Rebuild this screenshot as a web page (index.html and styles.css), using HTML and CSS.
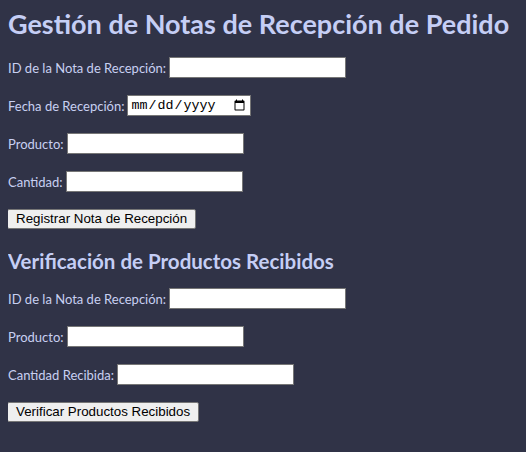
FILE: index.html
```html
<!DOCTYPE html>
<html lang="es">
<head>
<meta charset="utf-8">
<title>Gestión de Notas de Recepción de Pedido</title>
<link rel="stylesheet" href="styles.css">
</head>
<body>
<h1 class="title">Gestión de Notas de Recepción de Pedido</h1>
<form class="form">
  <div class="field"><label class="label" for="id1">ID de la Nota de Recepción:</label><input class="input" id="id1" type="text"></div>
  <div class="field"><label class="label" for="fecha">Fecha de Recepción:</label><input class="input date" id="fecha" type="date"></div>
  <div class="field"><label class="label" for="prod1">Producto:</label><input class="input" id="prod1" type="text"></div>
  <div class="field"><label class="label" for="cant1">Cantidad:</label><input class="input" id="cant1" type="text"></div>
  <div class="actions"><button class="btn" type="button">Registrar Nota de Recepción</button></div>
</form>
<h2 class="subtitle">Verificación de Productos Recibidos</h2>
<form class="form">
  <div class="field"><label class="label" for="id2">ID de la Nota de Recepción:</label><input class="input" id="id2" type="text"></div>
  <div class="field"><label class="label" for="prod2">Producto:</label><input class="input" id="prod2" type="text"></div>
  <div class="field"><label class="label" for="cant2">Cantidad Recibida:</label><input class="input" id="cant2" type="text"></div>
  <div class="actions"><button class="btn" type="button">Verificar Productos Recibidos</button></div>
</form>
</body>
</html>
```
FILE: styles.css
```css
html, body {
  background: #303347;
}
body {
  margin: 8px;
  color: #c8d0f2;
  font-family: Lato, "Open Sans", sans-serif;
  font-size: 13px;
}
.title {
  margin: 0 0 17px 0;
  font-size: 27px;
  font-weight: 700;
  line-height: 32px;
  color: #c5cef5;
  white-space: nowrap;
}
.subtitle {
  margin: 0 0 15px 0;
  font-size: 20.5px;
  font-weight: 700;
  line-height: 24px;
  color: #c5cef5;
}
.form {
  display: flex;
  flex-direction: column;
  gap: 17px;
  margin: 0 0 20px 0;
}
.field {
  display: flex;
  align-items: center;
  height: 21px;
}
.label {
  margin-right: 3px;
}
.input {
  box-sizing: border-box;
  width: 177px;
  height: 21px;
  margin: 0;
  padding: 1px 2px;
  border: 1px solid #767676;
  background: #fff;
  font-family: "Liberation Sans", Arial, sans-serif;
  font-size: 13.33px;
}
.date {
  width: 124px;
  font-family: "Liberation Mono", monospace;
  font-size: 13.33px;
}
.actions {
  display: flex;
}
.btn {
  height: 20px;
  margin: 0 0 0 -1px;
  padding: 1px 8px;
  border: 1px solid #767676;
  border-radius: 2px;
  background: #efefef;
  color: #000;
  font-family: "Liberation Sans", Arial, sans-serif;
  font-size: 13.33px;
  line-height: 16px;
}
```
